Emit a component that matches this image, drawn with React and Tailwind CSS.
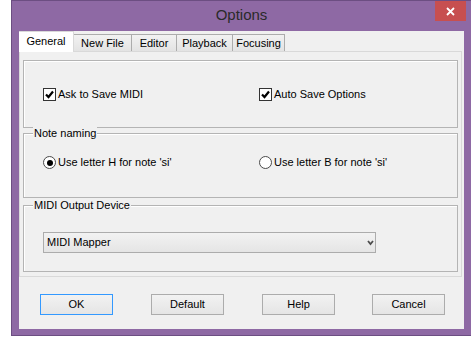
import React from 'react';

const tabs = [
  { name: 'General', width: 'w-[55px]', active: true },
  { name: 'New File', width: 'w-[58px]' },
  { name: 'Editor', width: 'w-[45px]' },
  { name: 'Playback', width: 'w-[56px]' },
  { name: 'Focusing', width: 'w-[52px]' },
];

const buttons = ['OK', 'Default', 'Help', 'Cancel'];

const CheckBox = ({ label }) => (
  <div className="flex items-center gap-[2px]">
    <span className="w-[13px] h-[13px] border border-[#333] bg-white flex items-center justify-center shrink-0">
      <svg width="9" height="9" viewBox="0 0 9 9">
        <path d="M1 4.5 L3.5 7 L8 1.5" fill="none" stroke="#000" strokeWidth="2.2" />
      </svg>
    </span>
    <span className="leading-[13px]">{label}</span>
  </div>
);

const Radio = ({ label, checked }) => (
  <div className="flex items-center gap-[2px]">
    <span className="w-[13px] h-[13px] rounded-full border border-[#4a4a4a] bg-white flex items-center justify-center shrink-0">
      {checked && <span className="w-[6px] h-[6px] rounded-full bg-black" />}
    </span>
    <span className="leading-[13px]">{label}</span>
  </div>
);

const GroupLabel = ({ children }) => (
  <span className="absolute -top-[8px] left-[9px] px-[1px] bg-[#f0f0f0] leading-[14px]">{children}</span>
);

export default function App() {
  return (
    <div className="w-[471px] h-[337px] bg-white text-[11px] text-black" style={{ fontFamily: '"Liberation Sans", Arial, sans-serif' }}>
      <div className="ml-[11px] w-[460px] h-[336px] bg-[#8e69a4] border border-[#6c4e82] border-r-0 flex flex-col px-[7px] pb-[6px]">
        {/* Title bar */}
        <div className="h-[30px] grid grid-cols-[1fr_auto_1fr] -mx-[7px]">
          <div />
          <div className="self-center text-[15px] text-[#2a2a2a] pb-[1px]">Options</div>
          <div className="justify-self-end self-start mr-[5px] w-[31px] h-[20px] bg-[#c74f50] flex items-center justify-center">
            <svg width="9" height="9" viewBox="0 0 9 9">
              <path d="M1 1 L8 8 M8 1 L1 8" stroke="#fff" strokeWidth="1.8" />
            </svg>
          </div>
        </div>

        {/* Client area */}
        <div className="flex-1 bg-[#f0f0f0] flex flex-col">
          {/* Tabs */}
          <div className="h-[20px] flex items-end relative z-10">
            {tabs.map((t) =>
              t.active ? (
                <div key={t.name} className={`${t.width} h-[21px] -mb-[1px] bg-white border-t border-r border-[#d9d9d9] flex items-center justify-center pb-[2px]`}>
                  {t.name}
                </div>
              ) : (
                <div
                  key={t.name}
                  className={`${t.width} h-[17px] bg-gradient-to-b from-[#f2f2f2] to-[#e3e3e3] border-t border-r border-[#acacac] flex items-center justify-center`}
                >
                  {t.name}
                </div>
              )
            )}
          </div>

          {/* Tab page */}
          <div className="w-[443px] h-[226px] border border-[#d9d9d9] bg-[#f0f0f0] pt-[8px] px-[3px] flex flex-col">
            <div className="h-[68px] border border-[#b4b4b4] shadow-[inset_1px_1px_0_#fff] pt-[27px] pl-[19px] flex items-start">
              <div className="w-[216px]">
                <CheckBox label="Ask to Save MIDI" />
              </div>
              <CheckBox label="Auto Save Options" />
            </div>

            <div className="relative mt-[5px] h-[65px] border border-[#b4b4b4] shadow-[inset_1px_1px_0_#fff] pt-[22px] pl-[19px] flex items-start">
              <GroupLabel>Note naming</GroupLabel>
              <div className="w-[216px]">
                <Radio label="Use letter H for note 'si'" checked />
              </div>
              <Radio label="Use letter B for note 'si'" />
            </div>

            <div className="relative mt-[7px] h-[67px] border border-[#b4b4b4] shadow-[inset_1px_1px_0_#fff] pt-[26px] pl-[19px]">
              <GroupLabel>MIDI Output Device</GroupLabel>
              <div className="w-[333px] h-[21px] border border-[#acacac] bg-gradient-to-b from-[#f2f2f2] to-[#e5e5e5] flex items-center justify-between pl-[3px] pr-[1px]">
                <span>MIDI Mapper</span>
                <svg width="7" height="6" viewBox="0 0 7 6">
                  <path d="M1 1 L3.5 4 L6 1" fill="none" stroke="#4d4d4d" strokeWidth="1.8" />
                </svg>
              </div>
            </div>
          </div>

          {/* Buttons */}
          <div className="mt-[17px] pl-[21px] flex gap-[38px]">
            {buttons.map((b, i) => (
              <div
                key={b}
                className={`w-[73px] h-[21px] flex items-center justify-center border bg-gradient-to-b from-[#f2f2f2] to-[#e5e5e5] ${
                  i === 0 ? 'border-[#3399ff]' : 'border-[#acacac]'
                } ${i === 3 ? '-ml-[1px]' : ''}`}
              >
                {b}
              </div>
            ))}
          </div>
        </div>
      </div>
    </div>
  );
}
